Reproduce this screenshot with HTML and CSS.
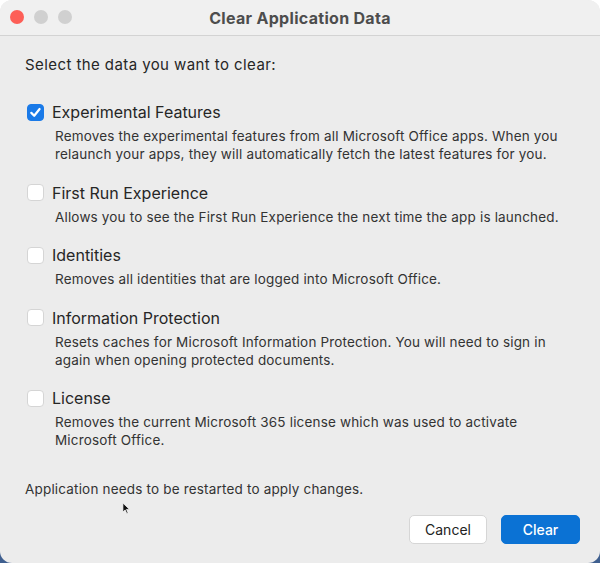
FILE: index.html
```html
<!DOCTYPE html>
<html>
<head>
<meta charset="utf-8">
<link rel="stylesheet" href="styles.css">
</head>
<body>
<div class="window">
  <div class="titlebar">
    <div class="lights">
      <span class="light red"></span>
      <span class="light gray"></span>
      <span class="light gray"></span>
    </div>
    <div class="title">Clear Application Data</div>
  </div>
  <div class="content">
    <div class="prompt">Select the data you want to clear:</div>
    <div class="items">
      <div class="item">
        <div class="row">
          <span class="check checked">
            <svg viewBox="0 0 17 17" width="17" height="17"><path d="M4.3 8.9 L7.2 11.8 L12.6 5" fill="none" stroke="#fff" stroke-width="2.2" stroke-linecap="round" stroke-linejoin="round"/></svg>
          </span>
          <span class="label">Experimental Features</span>
        </div>
        <div class="desc">Removes the experimental features from all Microsoft Office apps. When you relaunch your apps, they will automatically fetch the latest features for you.</div>
      </div>
      <div class="item">
        <div class="row"><span class="check"></span><span class="label">First Run Experience</span></div>
        <div class="desc">Allows you to see the First Run Experience the next time the app is launched.</div>
      </div>
      <div class="item">
        <div class="row"><span class="check"></span><span class="label">Identities</span></div>
        <div class="desc">Removes all identities that are logged into Microsoft Office.</div>
      </div>
      <div class="item">
        <div class="row"><span class="check"></span><span class="label">Information Protection</span></div>
        <div class="desc">Resets caches for Microsoft Information Protection. You will need to sign in again when opening protected documents.</div>
      </div>
      <div class="item">
        <div class="row"><span class="check"></span><span class="label">License</span></div>
        <div class="desc">Removes the current Microsoft 365 license which was used to activate Microsoft Office.</div>
      </div>
    </div>
    <div class="note">Application needs to be restarted to apply changes.</div>
    <div class="buttons">
      <button class="btn cancel">Cancel</button>
      <button class="btn primary">Clear</button>
    </div>
  </div>
  <svg class="cursor" viewBox="0 0 10 14" width="9" height="13"><path d="M1 1 L1 11 L3.5 8.6 L5.3 12.6 L6.8 11.9 L5 8 L8.4 8 Z" fill="#111" stroke="#fff" stroke-width="0.8"/></svg>
</div>
</body>
</html>
```
FILE: styles.css
```css
html, body {
  margin: 0;
  padding: 0;
}
body {
  width: 600px;
  height: 563px;
  background: linear-gradient(to bottom, #ffffff 0, #ffffff 540px, #3f5f8f 556px);
  font-family: Inter, "Noto Sans", sans-serif;
  overflow: hidden;
}
.window {
  position: relative;
  width: 600px;
  height: 563px;
  box-sizing: border-box;
  background: #ececec;
  border-radius: 12px;
  overflow: hidden;
  display: flex;
  flex-direction: column;
}
.titlebar {
  height: 35px;
  flex: none;
  background: #f0f0f0;
  border-bottom: 1px solid #d3d3d3;
  display: flex;
  align-items: center;
  justify-content: center;
  position: relative;
}
.lights {
  position: absolute;
  left: 10px;
  top: 10px;
  display: flex;
  gap: 10px;
}
.light {
  width: 14px;
  height: 14px;
  border-radius: 50%;
  display: block;
}
.light.red { background: #fd5f57; }
.light.gray { background: #d0d0d0; }
.title {
  font-size: 16px;
  font-weight: 700;
  color: #4d4d4d;
  letter-spacing: 0.3px;
}
.content {
  flex: 1;
  padding: 19px 20px 20px 25px;
  display: flex;
  flex-direction: column;
}
.prompt {
  font-size: 15px;
  line-height: 20px;
  color: #262626;
  letter-spacing: 0.42px;
}
.items {
  margin-top: 25px;
  display: flex;
  flex-direction: column;
  gap: 17.5px;
}
.row {
  display: flex;
  align-items: center;
  height: 24px;
}
.check {
  width: 17px;
  height: 17px;
  box-sizing: border-box;
  border-radius: 4px;
  background: #fff;
  border: 1px solid #d5d5d5;
  margin-left: 2px;
  margin-right: 8px;
  display: flex;
}
.check.checked {
  background: #1a7ae8;
  border-color: #1a7ae8;
}
.check.checked svg { margin: -1px; }
.label {
  font-size: 16px;
  color: #262626;
}
.desc {
  margin-top: 3px;
  padding-left: 30px;
  font-size: 13.5px;
  line-height: 18px;
  color: #333;
  letter-spacing: 0.17px;
}
.note {
  margin-top: 30px;
  font-size: 13.5px;
  line-height: 20px;
  color: #333;
  letter-spacing: 0.18px;
}
.buttons {
  margin-top: 16px;
  display: flex;
  justify-content: flex-end;
  gap: 14px;
}
.btn {
  font-family: Inter, "Noto Sans", sans-serif;
  font-size: 14px;
  height: 29px;
  border-radius: 5px;
  padding: 0;
}
.btn.cancel {
  width: 78px;
  background: #fff;
  border: 1px solid #d6d6d6;
  color: #222;
}
.btn.primary {
  width: 79px;
  background: #0b72d4;
  border: 1px solid #0b72d4;
  color: #fff;
  font-weight: 500;
}
.cursor {
  position: absolute;
  left: 122px;
  top: 502px;
}
```
